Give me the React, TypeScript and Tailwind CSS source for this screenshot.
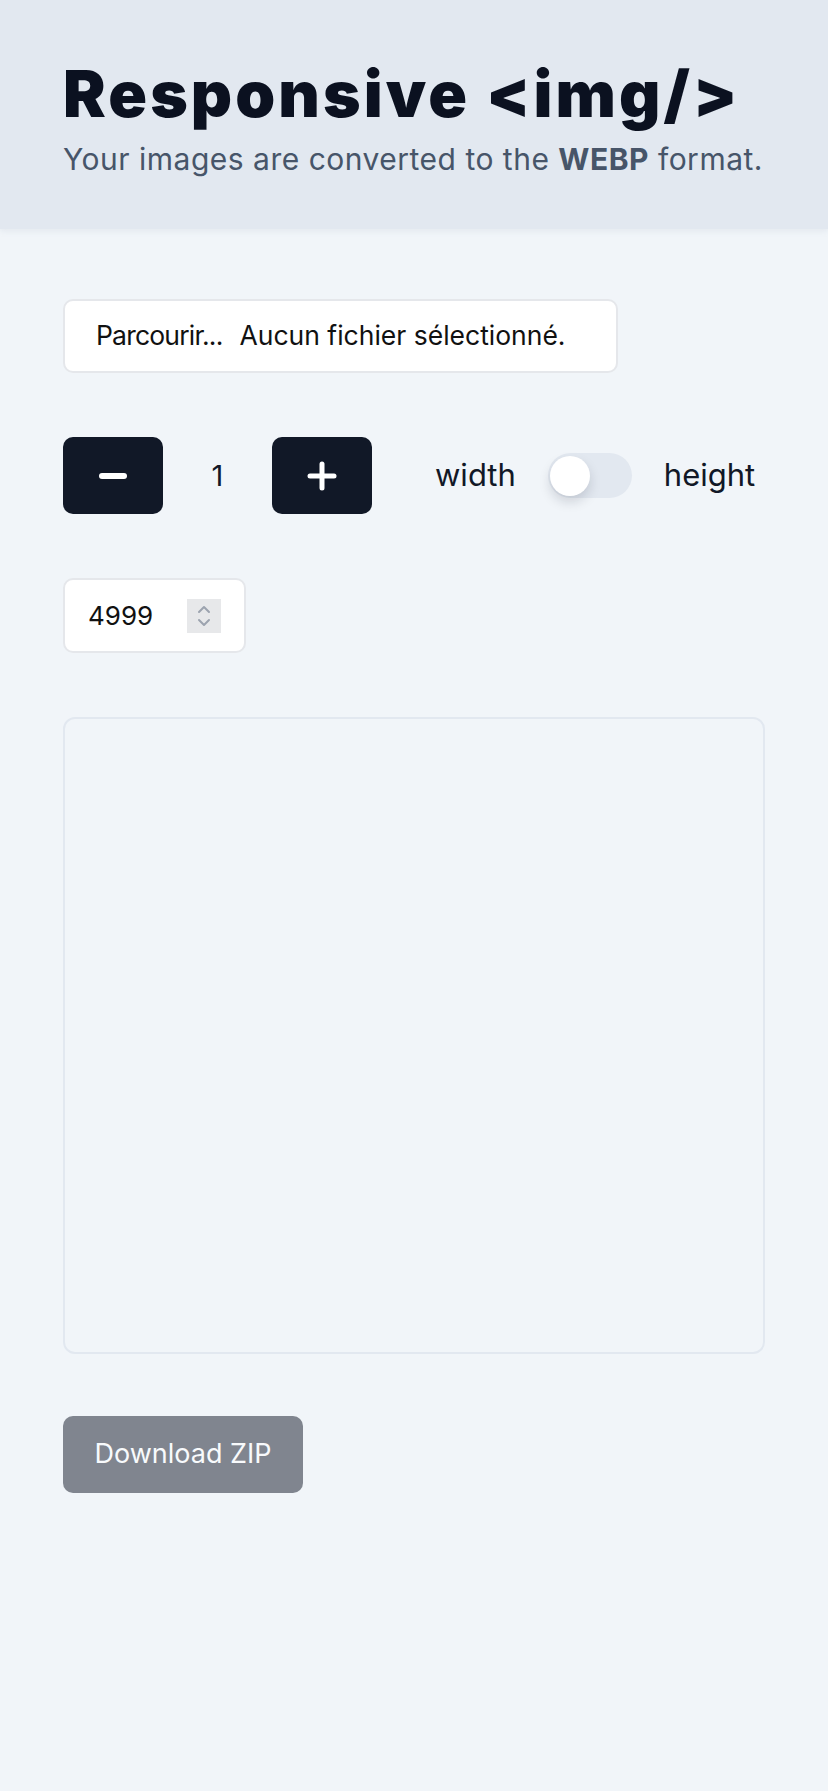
import React from "react";

export default function App() {
  return (
    <div className="min-h-[1791px] w-full bg-[#f1f5f9] font-['Inter',sans-serif]">
      <header className="bg-[#e2e8f0] px-[63px] pt-[62px] pb-[52px] shadow-[0_2px_6px_rgba(148,163,184,0.15)]">
        <h1 className="text-[64px] leading-[64px] font-black tracking-[3.1px] text-[#0b1120]">
          Responsive &lt;img/&gt;
        </h1>
        <p className="mt-[15px] text-[30px] leading-[36px] tracking-[0.5px] text-[#475569]">
          Your images are converted to the <span className="font-bold">WEBP</span> format.
        </p>
      </header>

      <main className="flex flex-col gap-[64px] px-[63px] pt-[70px]">
        <div className="flex h-[74px] w-[555px] items-center rounded-[10px] border-2 border-[#e5e7eb] bg-white pl-[31px] text-[26.5px] text-[#111111]">
          <span className="tracking-[-0.8px]">Parcourir...</span>
          <span className="ml-[17px]">Aucun fichier sélectionné.</span>
        </div>

        <div className="flex h-[77px] items-center">
          <button className="flex h-[77px] w-[100px] items-center justify-center rounded-[10px] bg-[#111827]">
            <svg width="30" height="8" viewBox="0 0 30 8">
              <line x1="4" y1="4" x2="26" y2="4" stroke="white" strokeWidth="6" strokeLinecap="round" />
            </svg>
          </button>
          <span className="w-[109px] text-center text-[29px] text-[#111827]">1</span>
          <button className="flex h-[77px] w-[100px] items-center justify-center rounded-[10px] bg-[#111827]">
            <svg width="30" height="30" viewBox="0 0 30 30">
              <line x1="15" y1="3" x2="15" y2="27" stroke="white" strokeWidth="5" strokeLinecap="round" />
              <line x1="3" y1="15" x2="27" y2="15" stroke="white" strokeWidth="5" strokeLinecap="round" />
            </svg>
          </button>
          <div className="ml-[63px] flex items-center gap-[32px]">
            <span className="text-[31px] text-[#111827]">width</span>
            <div className="flex h-[45px] w-[84px] items-center rounded-full bg-[#e2e8f0] px-[2px]">
              <div className="h-[40px] w-[40px] rounded-full bg-white shadow-[0_6px_12px_rgba(15,23,42,0.15)]" />
            </div>
            <span className="text-[31px] text-[#111827]">height</span>
          </div>
        </div>

        <div className="flex h-[75px] w-[183px] items-center justify-between rounded-[10px] border-2 border-[#e5e7eb] bg-white pl-[23px] pr-[23px]">
          <span className="text-[26px] text-[#111111]">4999</span>
          <div className="flex h-[34px] w-[34px] flex-col items-center justify-center bg-[#e7e8ea]">
            <svg width="16" height="26" viewBox="0 0 16 26">
              <polyline points="3,9 8,4 13,9" fill="none" stroke="#9ca3af" strokeWidth="2" strokeLinecap="round" strokeLinejoin="round" />
              <polyline points="3,17 8,22 13,17" fill="none" stroke="#9ca3af" strokeWidth="2" strokeLinecap="round" strokeLinejoin="round" />
            </svg>
          </div>
        </div>

        <div className="h-[637px] w-[702px] rounded-[12px] border-2 border-[#e2e8f0]" />

        <div className="-mt-[2px]">
          <button className="h-[77px] w-[240px] rounded-[10px] bg-[#111827] text-[27px] text-white opacity-50">
            Download ZIP
          </button>
        </div>
      </main>
    </div>
  );
}
